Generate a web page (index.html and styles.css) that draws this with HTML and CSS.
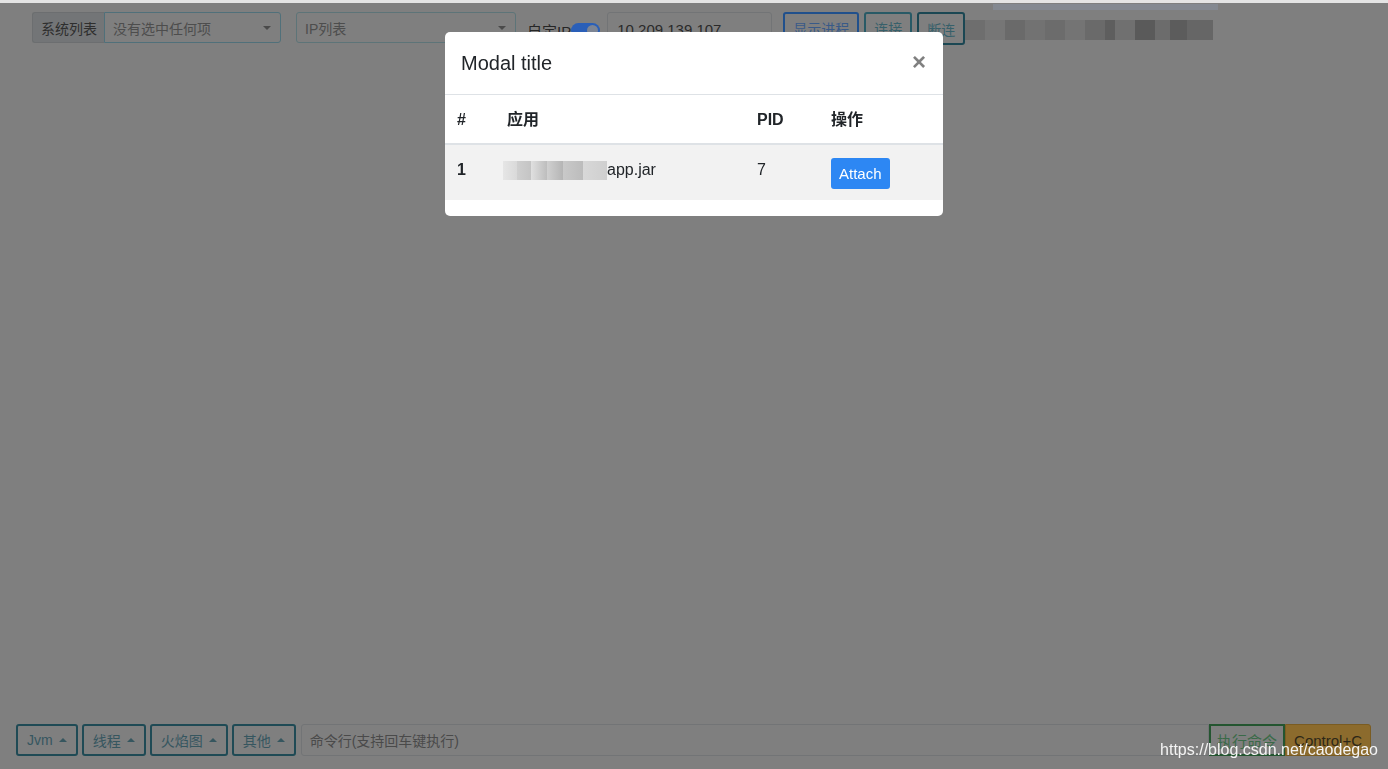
FILE: index.html
```html
<!DOCTYPE html>
<html lang="zh">
<head>
  <meta charset="UTF-8"/>
  <meta name="viewport" content="width=device-width, initial-scale=1.0"/>
  <title>Arthas</title>
  <link rel="stylesheet" href="styles.css">
</head>
<body>

  <div class="chrome-line"></div>

  <div class="page">
    <div class="toolbar">
      <div class="input-group">
        <span class="addon">系统列表</span>
        <div class="select sys-select">没有选中任何项<span class="caret-down"></span></div>
      </div>
      <div class="select ip-select">IP列表<span class="caret-down"></span></div>
      <label class="switch-label">自定IP<span class="switch"><span class="knob"></span></span></label>
      <div class="text-input ip-input">10.209.139.107</div>
      <div class="btn-row">
        <button class="btn btn-blue">显示进程</button>
        <button class="btn btn-teal">连接</button>
        <button class="btn btn-teal thick">断连</button>
      </div>
      <div class="mosaic">
        <span class="strip"></span>
      </div>
    </div>

    <div class="console"></div>

    <div class="cmdbar">
      <button class="btn btn-teal dropup">Jvm</button>
      <button class="btn btn-teal dropup">线程</button>
      <button class="btn btn-teal dropup">火焰图</button>
      <button class="btn btn-teal dropup">其他</button>
      <div class="text-input cmd-input">命令行(支持回车键执行)</div>
      <button class="btn btn-green">执行命令</button>
      <button class="btn btn-yellow">Control+C</button>
    </div>
  </div>

  <div class="modal-wrap">
    <div class="modal">
      <div class="modal-header">
        <h5 class="modal-title">Modal title</h5>
        <span class="close">&times;</span>
      </div>
      <table class="table">
        <thead>
          <tr>
            <th class="c-num">#</th>
            <th class="c-app">应用</th>
            <th class="c-pid">PID</th>
            <th>操作</th>
          </tr>
        </thead>
        <tbody>
          <tr>
            <th>1</th>
            <td><span class="blur-name"></span>app.jar</td>
            <td>7</td>
            <td><button class="btn-attach">Attach</button></td>
          </tr>
        </tbody>
      </table>
    </div>
  </div>

  <div class="watermark">https://blog.csdn.net/caodegao</div>

</body>
</html>
```

FILE: styles.css
```css
html, body {
  margin: 0;
  padding: 0;
  height: 100%;
}

body {
  background-color: #7f7f7f;
  font-family: "Liberation Sans", "Noto Sans CJK SC", sans-serif;
  font-size: 14px;
  color: #2b2b2b;
  overflow: hidden;
}

.chrome-line {
  height: 3px;
  background-color: #e4e4e4;
}

.page {
  height: calc(100% - 3px);
  display: flex;
  flex-direction: column;
  box-sizing: border-box;
}

/* top toolbar */
.toolbar {
  display: flex;
  align-items: flex-start;
  padding: 9px 0 0 32px;
  height: 41px;
}

.input-group {
  display: flex;
  height: 31px;
}

.addon {
  display: flex;
  align-items: center;
  padding: 0 7px 0 8px;
  background-color: #737577;
  border: 1px solid #6c6e70;
  border-right: none;
  border-radius: 3px 0 0 3px;
  color: #2e2e2e;
}

.select {
  position: relative;
  display: flex;
  align-items: center;
  box-sizing: border-box;
  height: 31px;
  padding: 0 8px;
  border: 1px solid #50707a;
  border-radius: 3px;
  color: #4d4d4d;
  white-space: nowrap;
}

.sys-select {
  width: 177px;
  border-radius: 0 3px 3px 0;
}

.ip-select {
  width: 220px;
  margin-left: 15px;
  border-color: #5d7478;
}

.caret-down {
  position: absolute;
  right: 9px;
  top: 13px;
  border-left: 4px solid transparent;
  border-right: 4px solid transparent;
  border-top: 4px solid #4a4a4a;
}

.switch-label {
  display: flex;
  align-items: center;
  height: 31px;
  margin-left: 11px;
  font-size: 15px;
  color: #262626;
  padding-top: 3px;
  white-space: nowrap;
}

.switch {
  position: relative;
  display: inline-block;
  width: 29px;
  height: 15px;
  border-radius: 8px;
  background-color: #2a5fb8;
}

.knob {
  position: absolute;
  right: 2px;
  top: 2px;
  width: 11px;
  height: 11px;
  border-radius: 50%;
  background-color: #7d8594;
}

.text-input {
  display: flex;
  align-items: center;
  box-sizing: border-box;
  height: 31px;
  padding: 0 9px;
  border: 1px solid #727476;
  border-radius: 3px;
  color: #2a2a2a;
  white-space: nowrap;
}

.ip-input {
  width: 165px;
  margin-left: 7px;
  font-size: 15px;
  padding-top: 3px;
}

.btn-row {
  display: flex;
  gap: 5px;
  margin-left: 11px;
}

.btn {
  box-sizing: border-box;
  height: 32px;
  padding: 0 7px;
  background: transparent;
  border: 2px solid #285a66;
  border-radius: 3px;
  font-family: "Liberation Sans", "Noto Sans CJK SC", sans-serif;
  font-size: 14px;
  color: #37606a;
  white-space: nowrap;
}

.btn-blue {
  border-color: #20508c;
  color: #395a88;
  padding: 0 8px;
}

.btn-row .btn-teal {
  padding: 0 8px;
}

.btn-teal.thick {
  border-color: #1b4753;
  height: 33px;
}

.mosaic {
  position: relative;
  width: 248px;
  height: 20px;
  margin-top: 8px;
  background: linear-gradient(90deg,
    #6e6e6e 0, #6e6e6e 20px, #767676 20px, #767676 40px,
    #6a6a6a 40px, #6a6a6a 60px, #727272 60px, #727272 80px,
    #6c6c6c 80px, #6c6c6c 100px, #747474 100px, #747474 120px,
    #6a6a6a 120px, #6a6a6a 140px, #5e5e5e 140px, #5e5e5e 150px,
    #707070 150px, #707070 170px, #5a5a5a 170px, #5a5a5a 190px,
    #6c6c6c 190px, #6c6c6c 205px, #5c5c5c 205px, #5c5c5c 222px,
    #666 222px, #666 248px);
}

.strip {
  position: absolute;
  left: 28px;
  top: -16px;
  width: 225px;
  height: 6px;
  background-color: #848991;
}

.console {
  flex: 1;
}

/* bottom command bar */
.cmdbar {
  display: flex;
  align-items: center;
  gap: 4px;
  padding: 0 17px 13px 16px;
}

.dropup {
  display: flex;
  align-items: center;
  padding: 0 9px 0 9px;
  border-color: #1f4a55;
  color: #36565f;
  font-size: 14px;
}

.dropup::after {
  content: "";
  margin-left: 6px;
  border-left: 4px solid transparent;
  border-right: 4px solid transparent;
  border-bottom: 4px solid #36565f;
}

.cmd-input {
  flex: 1;
  height: 32px;
  margin-left: 1px;
  padding: 0 8px;
  border-radius: 3px 0 0 3px;
  font-size: 14px;
  color: #4a4a4a;
}

.btn-green {
  margin-left: -4px;
  padding: 0 6px;
  border-color: #245530;
  border-radius: 0;
  color: #3a6a48;
  font-size: 15px;
}

.btn-yellow {
  margin-left: -4px;
  padding: 0 8px;
  background-color: #8c6b2d;
  border: 1px solid #7a5c22;
  border-radius: 0 3px 3px 0;
  color: #2c2718;
  font-size: 15px;
}

/* modal */
.modal-wrap {
  position: fixed;
  top: 32px;
  left: 0;
  right: 0;
  display: flex;
  justify-content: center;
}

.modal {
  width: 498px;
  background-color: #fff;
  border-radius: 5px;
  overflow: hidden;
  font-family: "Liberation Sans", "Noto Sans CJK SC", sans-serif;
  color: #212529;
}

.modal-header {
  display: flex;
  align-items: center;
  justify-content: space-between;
  height: 62px;
  padding: 0 17px 0 16px;
  border-bottom: 1px solid #dee2e6;
}

.modal-title {
  margin: 0;
  font-size: 20px;
  font-weight: normal;
}

.close {
  font-size: 24px;
  font-weight: bold;
  color: #808080;
  line-height: 1;
  margin-top: -2px;
}

.table {
  width: 100%;
  border-collapse: collapse;
  margin-bottom: 16px;
  font-size: 16px;
}

.table th,
.table td {
  padding: 13px 12px 11px;
  text-align: left;
  vertical-align: top;
  line-height: 24px;
}

.table thead th {
  border-bottom: 2px solid #dee2e6;
  font-weight: bold;
}

.c-num { width: 26px; }
.c-app { width: 226px; }
.c-pid { width: 50px; }

.table tbody tr {
  background-color: #f2f2f2;
}

.blur-name {
  display: inline-block;
  width: 104px;
  height: 19px;
  margin-left: -4px;
  vertical-align: -5px;
  background: linear-gradient(90deg,
    #e6e6e6 0, #d9d9d9 14px, #cfcfcf 14px, #c4c4c4 28px,
    #e0e0e0 28px, #bdbdbd 44px, #d0d0d0 44px, #b5b5b5 60px,
    #c9c9c9 60px, #bcbcbc 80px, #d8d8d8 80px, #cfcfcf 104px);
}

.btn-attach {
  height: 31px;
  padding: 0 8px;
  border: none;
  border-radius: 3px;
  background-color: #2d87f3;
  color: #fff;
  font-family: "Liberation Sans", sans-serif;
  font-size: 15px;
  vertical-align: top;
}

.watermark {
  position: fixed;
  right: 10px;
  bottom: 10px;
  color: #f4f4f4;
  font-family: "Liberation Sans", sans-serif;
  font-size: 16px;
}
```
